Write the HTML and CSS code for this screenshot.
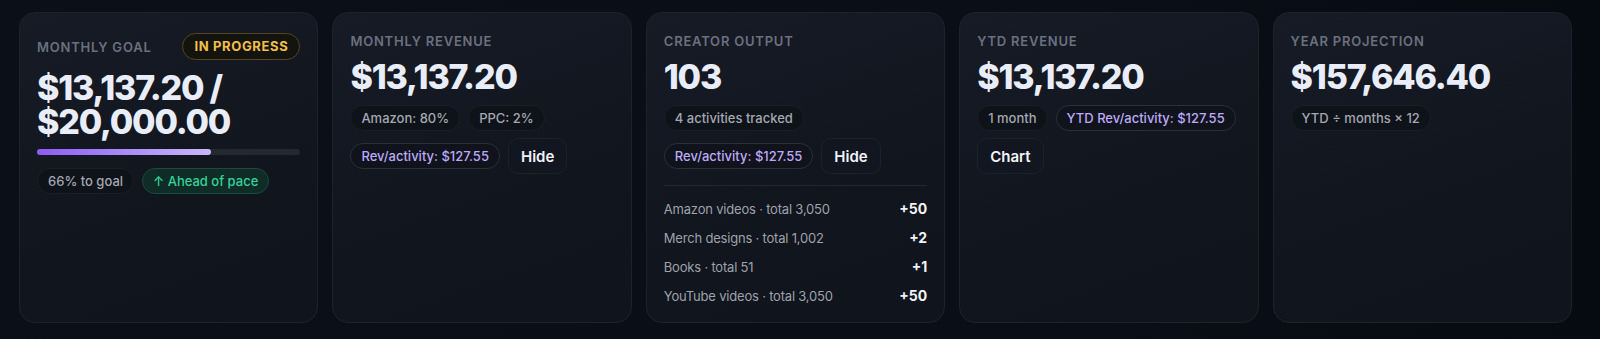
FILE: index.html
```html
<!DOCTYPE html>
<html lang="en">
<head>
	<meta charset="UTF-8">
	<title>Creator dashboard</title>
	<link rel="stylesheet" href="styles.css">
</head>
<body>
	<div class="stats">
		<div class="card">
			<div class="card-head">
				<div class="label">Monthly goal</div>
				<div class="badge">In progress</div>
			</div>
			<div class="value goal">
				<span>$13,137.20 /</span>
				<span>$20,000.00</span>
			</div>
			<div class="bar"><div class="bar-fill" style="width:66%"></div></div>
			<div class="row">
				<span class="pill">66% to goal</span>
				<span class="pill good">&#8593; Ahead of pace</span>
			</div>
		</div>

		<div class="card">
			<div class="label">Monthly revenue</div>
			<div class="value">$13,137.20</div>
			<div class="row">
				<span class="pill">Amazon: 80%</span>
				<span class="pill">PPC: 2%</span>
			</div>
			<div class="row">
				<span class="pill accent">Rev/activity: $127.55</span>
				<button class="btn">Hide</button>
			</div>
		</div>

		<div class="card">
			<div class="label">Creator output</div>
			<div class="value">103</div>
			<div class="row">
				<span class="pill">4 activities tracked</span>
			</div>
			<div class="row">
				<span class="pill accent">Rev/activity: $127.55</span>
				<button class="btn">Hide</button>
			</div>
			<ul class="list">
				<li><span>Amazon videos · total 3,050</span><b>+50</b></li>
				<li><span>Merch designs · total 1,002</span><b>+2</b></li>
				<li><span>Books · total 51</span><b>+1</b></li>
				<li><span>YouTube videos · total 3,050</span><b>+50</b></li>
			</ul>
		</div>

		<div class="card">
			<div class="label">YTD revenue</div>
			<div class="value">$13,137.20</div>
			<div class="row">
				<span class="pill">1 month</span>
				<span class="pill accent">YTD Rev/activity: $127.55</span>
			</div>
			<div class="row">
				<button class="btn">Chart</button>
			</div>
		</div>

		<div class="card">
			<div class="label">Year projection</div>
			<div class="value">$157,646.40</div>
			<div class="row">
				<span class="pill">YTD ÷ months × 12</span>
			</div>
		</div>
	</div>
</body>
</html>
```

FILE: styles.css
```css
*{
	box-sizing:border-box;
}
body{
	margin:0;
	padding:0;
	height:339px;
	background:#0a0e16;
	background:linear-gradient(90deg,#0b0f18 0%,#0a0e16 70%,#060a11 100%);
	font-family:Inter,"Noto Sans",sans-serif;
	color:#e8ecf8;
}
.stats{
	display:grid;
	grid-template-columns:repeat(5,1fr);
	gap:14px;
	height:100%;
	padding:12px 28px 16px 19px;
}
.card{
	background:linear-gradient(160deg,#161b25 0%,#11151e 60%,#10141c 100%);
	border:1px solid #1d222d;
	border-radius:16px;
	padding:20px 17px 0 17px;
}
.card-head{
	display:flex;
	align-items:center;
	justify-content:space-between;
}
.label{
	font-size:13px;
	line-height:16px;
	font-weight:600;
	letter-spacing:0.06em;
	text-transform:uppercase;
	color:#6b7080;
}
.badge{
	height:27px;
	line-height:25px;
	padding:0 11px;
	border:1px solid #56451f;
	border-radius:999px;
	background:#14140f;
	color:#f3bf4b;
	font-size:13px;
	font-weight:700;
	letter-spacing:0.05em;
	text-transform:uppercase;
}
.value{
	margin-top:8px;
	font-size:34px;
	line-height:40px;
	font-weight:800;
	letter-spacing:-0.035em;
	color:#e9edf9;
}
.value.goal{
	margin-top:11px;
}
.value.goal span{
	display:block;
	height:34px;
	line-height:34px;
}
.bar{
	margin-top:10px;
	height:6px;
	border-radius:999px;
	background:#232833;
}
.bar-fill{
	height:100%;
	border-radius:999px;
	background:linear-gradient(90deg,#8b5cf6,#c7b8fb);
}
.row{
	display:flex;
	align-items:center;
	gap:8px;
	margin-top:8px;
}
.bar + .row{
	margin-top:13px;
}
.row + .row{
	margin-top:7px;
}
.pill{
	display:inline-block;
	height:26px;
	line-height:24px;
	padding:0 10px;
	border:1px solid #191e28;
	border-radius:999px;
	background:#0e1219;
	color:#a4a7b1;
	font-size:13px;
	font-weight:500;
	white-space:nowrap;
}
.pill.accent{
	border-color:#2a2f3c;
	background:#10131c;
	color:#bcaaf7;
}
.pill.good{
	border-color:#1c4a3f;
	background:#0f2c27;
	color:#35d29b;
}
.btn{
	height:36px;
	padding:0 12px;
	border:1px solid #1c212b;
	border-radius:10px;
	background:#121620;
	color:#f1f3f8;
	font-family:Inter,"Noto Sans",sans-serif;
	font-size:15px;
	font-weight:600;
}
.list{
	list-style:none;
	margin:11px 0 0 0;
	padding:8px 0 0 0;
	border-top:1px solid #222733;
}
.list li{
	display:flex;
	justify-content:space-between;
	align-items:center;
	height:29px;
	font-size:13px;
	letter-spacing:-0.015em;
	color:#9ea2ad;
}
.list b{
	color:#f1f3f8;
	font-weight:700;
	font-size:14px;
	letter-spacing:0;
}
```
